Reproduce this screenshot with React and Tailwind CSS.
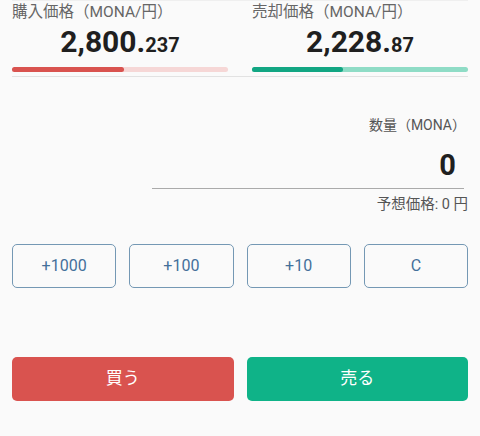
import React, { useState } from "react";

const font = "font-['Roboto','Noto_Sans_CJK_JP',sans-serif]";

const PriceBox = ({ label, main, sub, fill, track, ratio }) => (
  <div className="flex flex-col">
    <div className="text-[15.5px] leading-5 text-[#666] mt-[1px]">{label}</div>
    <div className="text-center mt-[4px] leading-[32px] text-[#1f1f1f] font-bold">
      <span className="text-[30px]">{main}</span>
      <span className="text-[20px]">{sub}</span>
    </div>
    <div className={`mt-[4px] h-[5px] rounded-full ${track}`}>
      <div className={`h-full rounded-full ${fill}`} style={{ width: `${ratio}%` }} />
    </div>
  </div>
);

const App = () => {
  const [amount, setAmount] = useState(0);
  const steps = [1000, 100, 10];

  return (
    <div className={`${font} w-[480px] h-[436px] bg-[#fafafa] px-3 overflow-hidden`}>
      <div className="border-t border-[#efefef]" />
      <div className="grid grid-cols-2 gap-6 pb-[4px] border-b border-[#e2e2e2]">
        <PriceBox
          label="購入価格（MONA/円）"
          main="2,800."
          sub="237"
          fill="bg-[#d9534f]"
          track="bg-[#f6d7d6]"
          ratio={52}
        />
        <PriceBox
          label="売却価格（MONA/円）"
          main="2,228."
          sub="87"
          fill="bg-[#12a683]"
          track="bg-[#8fdcc6]"
          ratio={42}
        />
      </div>

      {/* amount input */}
      <div className="flex flex-col items-end mt-[38px]">
        <div className="text-[14px] leading-5 text-[#555] pr-[2px]">数量（MONA）</div>
        <div className="w-[312px] mr-[4px] mt-[14px] border-b-[1.5px] border-[#aaa] text-right pr-[8px] pb-[6px]">
          <span className="text-[29px] leading-[32px] font-bold text-[#1f1f1f]">{amount}</span>
        </div>
        <div className="text-[14.5px] leading-5 text-[#555] mt-[6px]">予想価格: 0 円</div>
      </div>

      {/* quick add */}
      <div className="grid grid-cols-4 gap-[13px] mt-[29px]">
        {steps.map((s) => (
          <button
            key={s}
            onClick={() => setAmount(amount + s)}
            className="h-[44px] rounded-[5px] border border-[#7498b4] text-[#44709a] text-[16px]"
          >
            +{s}
          </button>
        ))}
        <button
          onClick={() => setAmount(0)}
          className="h-[44px] rounded-[5px] border border-[#7498b4] text-[#44709a] text-[16px]"
        >
          C
        </button>
      </div>

      {/* buy / sell */}
      <div className="grid grid-cols-2 gap-[13px] mt-[69px]">
        <button className="h-[44px] rounded-[5px] bg-[#d9534f] text-white text-[17px]">買う</button>
        <button className="h-[44px] rounded-[5px] bg-[#0fb388] text-white text-[17px]">売る</button>
      </div>
    </div>
  );
};

export default App;
